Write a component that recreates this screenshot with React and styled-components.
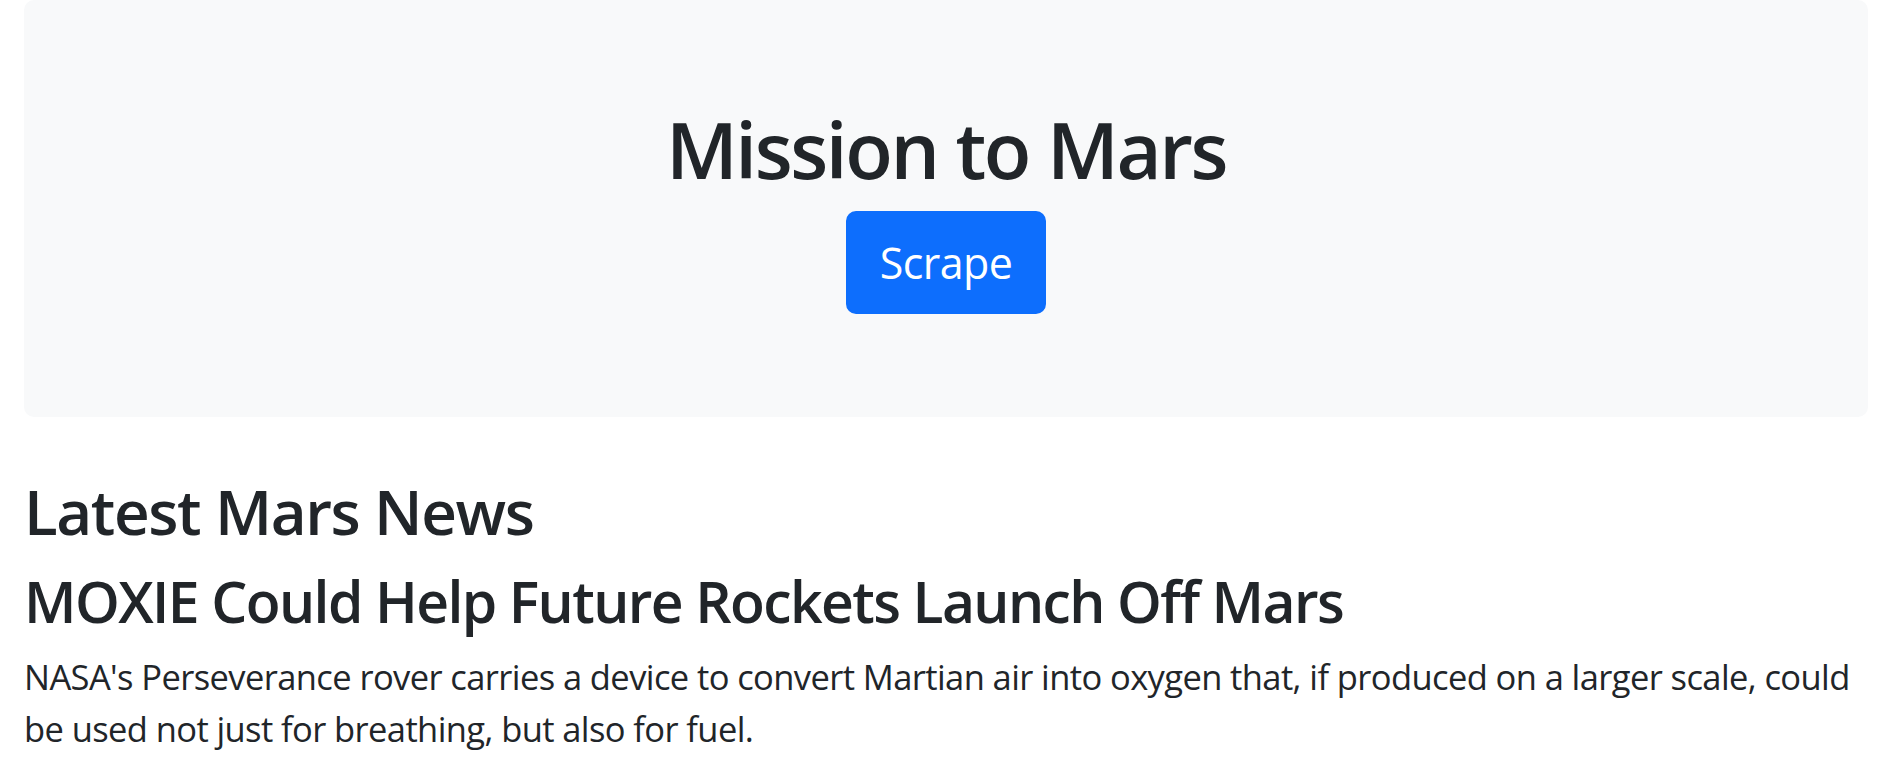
import React from 'react';
import styled, { createGlobalStyle } from 'styled-components';

const GlobalStyle = createGlobalStyle`
  body {
    margin: 0;
    background: #ffffff;
    color: #212529;
    font-family: "Open Sans", "Noto Sans", "Liberation Sans", sans-serif;
  }
`;

const Page = styled.div`
  padding: 0 15px 0 24px;
`;

const Jumbotron = styled.header`
  background: #f8f9fa;
  border-radius: 10px;
  padding: 103px 32px;
  display: flex;
  flex-direction: column;
  align-items: center;
  text-align: center;
`;

const Title = styled.h1`
  margin: 0 0 14px;
  font-size: 78px;
  font-weight: 600;
  line-height: 1.2;
  letter-spacing: -2.4px;
`;

const ScrapeButton = styled.button`
  font-family: inherit;
  font-size: 43px;
  line-height: 65px;
  color: #ffffff;
  background: #0d6efd;
  border: 2px solid #0d6efd;
  border-radius: 10px;
  padding: 17px 32px;
  letter-spacing: -0.6px;
  cursor: pointer;
`;

const Section = styled.section`
  padding-top: 57px;
`;

const SectionTitle = styled.h2`
  margin: 0 0 19px;
  font-size: 62px;
  font-weight: 600;
  line-height: 1.2;
  letter-spacing: -1.4px;
`;

const NewsTitle = styled.h3`
  margin: 0 0 16px;
  font-size: 57px;
  font-weight: 600;
  line-height: 1.2;
  letter-spacing: -1.6px;
`;

const NewsBody = styled.p`
  margin: 0;
  font-size: 34.5px;
  line-height: 52px;
  letter-spacing: -0.6px;
`;

const App = () => {
  return (
    <Page>
      <GlobalStyle />
      <Jumbotron>
        <Title>Mission to Mars</Title>
        <ScrapeButton>Scrape</ScrapeButton>
      </Jumbotron>

      <Section>
        <SectionTitle>Latest Mars News</SectionTitle>
        <NewsTitle>MOXIE Could Help Future Rockets Launch Off Mars</NewsTitle>
        <NewsBody>
          NASA's Perseverance rover carries a device to convert Martian air into oxygen that, if produced on a larger scale, could be used not just for breathing, but also for fuel.
        </NewsBody>
      </Section>
    </Page>
  );
};

export default App;
